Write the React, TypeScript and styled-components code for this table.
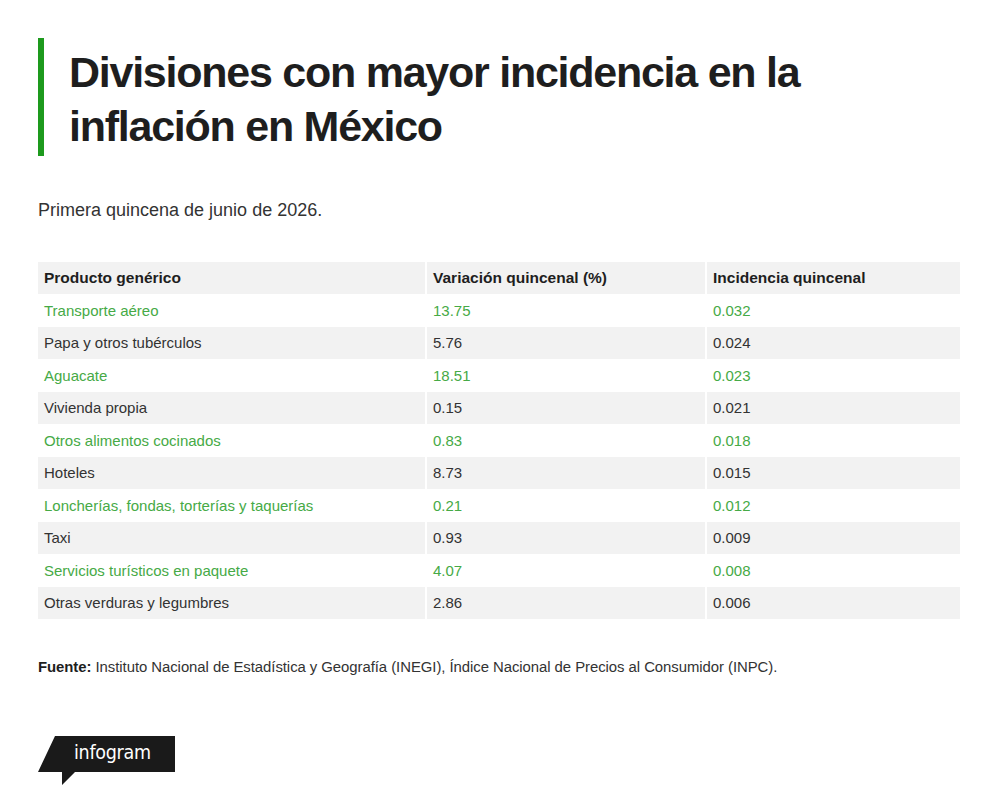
import React from "react";
import styled, { createGlobalStyle } from "styled-components";

const Global = createGlobalStyle`
  html, body { margin: 0; padding: 0; background: #ffffff; }
  body { font-family: "Liberation Sans", Arial, sans-serif; color: #333333; }
`;

const Page = styled.div`
  width: 1000px;
  height: 806px;
  box-sizing: border-box;
  padding: 38px 40px 0 38px;
  display: flex;
  flex-direction: column;
`;

const TitleBlock = styled.div`
  display: flex;
  align-items: stretch;
  gap: 25px;
`;

const Bar = styled.div`
  width: 6px;
  background: #1d9a1d;
  flex-shrink: 0;
`;

const Title = styled.h1`
  margin: 0;
  padding: 7px 0 3px;
  font-family: "Liberation Sans", Arial, sans-serif;
  font-weight: 700;
  font-size: 43px;
  line-height: 54px;
  letter-spacing: -1.25px;
  color: #1e1e1e;
`;

const Subtitle = styled.p`
  margin: 43px 0 0;
  font-size: 18px;
  line-height: 22px;
  letter-spacing: 0;
  color: #333333;
`;

const Table = styled.div`
  margin-top: 41px;
  display: grid;
  grid-template-columns: 387px 278px 1fr;
  column-gap: 2px;
  width: 922px;
`;

const Cell = styled.div<{ $shade: boolean; $green: boolean; $head?: boolean }>`
  background: ${(p) => (p.$shade ? "#f2f2f2" : "#ffffff")};
  height: ${(p) => (p.$head ? "32px" : "32.5px")};
  display: flex;
  align-items: center;
  padding-left: 6px;
  font-size: ${(p) => (p.$head ? "15.5px" : "15px")};
  letter-spacing: 0;
  font-weight: ${(p) => (p.$head ? 700 : 400)};
  color: ${(p) => (p.$head ? "#1e1e1e" : p.$green ? "#46aa46" : "#333333")};
  white-space: nowrap;
`;

const Source = styled.p`
  margin: 39px 0 0;
  font-size: 14.9px;
  line-height: 18px;
  letter-spacing: -0.05px;
  color: #333333;
  b { color: #1e1e1e; }
`;

const Logo = styled.div`
  margin-top: 60px;
  width: 140px;
  height: 52px;
  position: relative;
`;

const LogoText = styled.span`
  position: absolute;
  left: 36px;
  top: 5px;
  font-family: "DejaVu Sans Condensed", "DejaVu Sans", sans-serif;
  font-size: 19.5px;
  font-weight: 400;
  color: #ffffff;
  letter-spacing: -0.3px;
`;

const rows: [string, string, string][] = [
  ["Transporte aéreo", "13.75", "0.032"],
  ["Papa y otros tubérculos", "5.76", "0.024"],
  ["Aguacate", "18.51", "0.023"],
  ["Vivienda propia", "0.15", "0.021"],
  ["Otros alimentos cocinados", "0.83", "0.018"],
  ["Hoteles", "8.73", "0.015"],
  ["Loncherías, fondas, torterías y taquerías", "0.21", "0.012"],
  ["Taxi", "0.93", "0.009"],
  ["Servicios turísticos en paquete", "4.07", "0.008"],
  ["Otras verduras y legumbres", "2.86", "0.006"],
];

const headers = ["Producto genérico", "Variación quincenal (%)", "Incidencia quincenal"];

export default function App() {
  return (
    <>
      <Global />
      <Page>
        <TitleBlock>
          <Bar />
          <Title>
            Divisiones con mayor incidencia en la
            <br />
            inflación en México
          </Title>
        </TitleBlock>
        <Subtitle>Primera quincena de junio de 2026.</Subtitle>
        <Table>
          {headers.map((h) => (
            <Cell key={h} $shade $green={false} $head>
              {h}
            </Cell>
          ))}
          {rows.map((r, i) =>
            r.map((c, j) => (
              <Cell key={`${i}-${j}`} $shade={i % 2 === 1} $green={i % 2 === 0}>
                {c}
              </Cell>
            ))
          )}
        </Table>
        <Source>
          <b>Fuente:</b> Instituto Nacional de Estadística y Geografía (INEGI), Índice Nacional de Precios al Consumidor (INPC).
        </Source>
        <Logo>
          <svg width="140" height="52" viewBox="0 0 140 52">
            <path d="M17 0 H137 V36 H37 L24 49 V36 H0 Z" fill="#1a1a1a" />
          </svg>
          <LogoText>infogram</LogoText>
        </Logo>
      </Page>
    </>
  );
}
